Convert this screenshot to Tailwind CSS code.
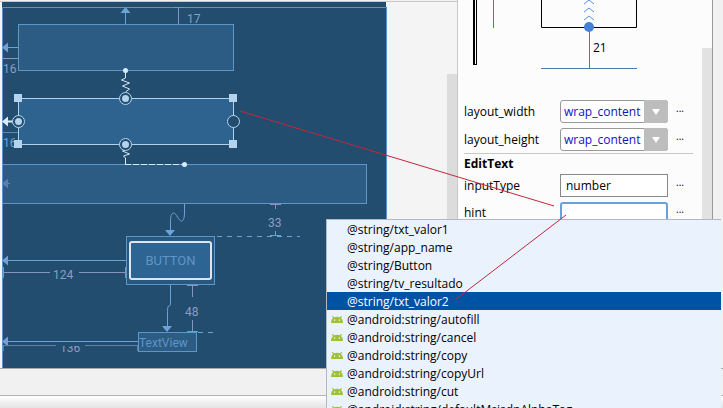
<!DOCTYPE html>
<html lang="en">

<head>
    <meta charset="UTF-8" />
    <meta name="viewport" content="width=device-width, initial-scale=1.0" />
    <title>Layout Editor</title>
    <script src="https://cdn.jsdelivr.net/npm/@tailwindcss/browser@4"></script>
</head>

<body class="relative flex flex-col h-screen overflow-hidden bg-[#f1f1f1] text-black text-[12px] font-['Open_Sans','Noto_Sans',sans-serif]">
    <main class="flex flex-1 min-h-0">
        <!-- Design surface -->
        <section class="relative flex-1 min-w-0 bg-[#f4f4f4] border-t border-[#c8c8c8] mt-px pl-[2px] overflow-hidden">
            <div class="relative w-[385px] h-full bg-[#234d6e] overflow-hidden">
                <svg class="block w-[385px] h-[366px] font-[Roboto,sans-serif]" viewBox="2 2 385 366" fill="none">
                    <defs>
                        <clipPath id="cut"><rect x="50" y="346" width="40" height="12" /></clipPath>
                    </defs>
                    <!-- device frame -->
                    <path d="M386 2h1v5h-1z" fill="#f4f4f4" />
                    <path d="M2.500 368V7.500H386.500V368" stroke="#5f93c2" />
                    <!-- widgets -->
                    <g stroke="#5f96c8">
                        <rect x="18.500" y="24.500" width="215" height="46" fill="#2c5b83" />
                        <rect x="2.500" y="164.500" width="364" height="39" fill="#2c5b83" />
                        <rect x="126.500" y="236.500" width="88" height="48" fill="#29587f" />
                        <rect x="138.500" y="332.500" width="58" height="19" fill="#2c5b83" />
                    </g>
                    <!-- constraints -->
                    <g stroke="#6ba3d6">
                        <path d="M125.500 24V12M18 47.500H7M126 260.500H7M138 341.500H7" />
                        <path d="M184.500 204v8c0 6-1 9-3 9c-3 0-5-8-8-8c-2 0-3 4-3 8v10M170.500 285v18c0 4-1 2-2 3s-1 4-1 8v13" />
                        <path d="M3 132.500H18M7 183.500h3" stroke="#5289bb" />
                    </g>
                    <path d="M125.500 7l5 6h-10zM2 47.500l6-5v10zM2 260.500l6-5v10zM2 341.500l6-5v10zM170 236l-5-6h10zM167 332l-5-6h10z" fill="#6ba3d6" />
                    <path d="M2 183.500l6-5v10z" fill="#4d84b6" />
                    <!-- margins -->
                    <g stroke="#8795bd">
                        <path d="M178.500 8V24M174 7.500h10M3 58.500H18" />
                        <path d="M3 272.500H50M79 272.500H126M3.500 267v11M125.500 267v11" />
                        <path d="M275.500 204v5M270 204.500h11M275.500 231v5M270 235.500h11" />
                        <path d="M192.500 285v12M187 285.500h11M192.500 320v12M187 331.500h11" />
                        <path d="M3 345.500H56M85 345.500H138M3.500 346v5M137.500 346v5" stroke="#647fa4" />
                    </g>
                    <path d="M217 236.500H300M198 332.500H214" stroke="#6ba3d6" stroke-dasharray="5 5" />
                    <g fill="#8f9cc4" font-size="12">
                        <text x="187" y="23">17</text>
                        <text x="3" y="73">16</text>
                        <text x="3" y="147" fill="#6ba3d6">16</text>
                        <text x="53" y="279">124</text>
                        <text x="268" y="227">33</text>
                        <text x="185" y="316">48</text>
                        <text x="60" y="352" clip-path="url(#cut)">136</text>
                    </g>
                    <text x="139" y="347" font-size="12" fill="#5f96c8">TextView</text>
                    <!-- selected widget -->
                    <rect x="18.500" y="98.500" width="215" height="46" fill="#2e628f" stroke="#add2f0" />
                    <path d="M125.500 70v8l-4 2l8 3l-7 3l7 3l-4 3M125.500 150l-3 1l7 3l-6 2l2 2v6" stroke="#d5ebfa" />
                    <path d="M125 164.500h57" stroke="#d5ebfa" stroke-dasharray="6 2" />
                    <g fill="#d5ebfa">
                        <circle cx="125.500" cy="70.500" r="2.500" />
                        <circle cx="184.500" cy="164.500" r="2.500" />
                        <path d="M2 121.500l6-5v4h5v2h-5v4z" />
                    </g>
                    <path d="M14 94h8v8h-8zM229 94h8v8h-8zM14 140h8v8h-8zM229 140h8v8h-8z" fill="#b4d3ec" />
                    <g fill="#234d6e" stroke="#b4d6f0">
                        <circle cx="125.500" cy="98.500" r="6" />
                        <circle cx="125.500" cy="144.500" r="6" />
                        <circle cx="18.500" cy="121.500" r="6" />
                        <circle cx="233.500" cy="121.500" r="6" />
                    </g>
                    <g fill="#b4d3ec">
                        <circle cx="125.500" cy="98.500" r="3.500" />
                        <circle cx="125.500" cy="144.500" r="3.500" />
                        <circle cx="18.500" cy="121.500" r="3.500" />
                    </g>
                </svg>
                <button class="absolute left-[127px] top-[239px] w-[83px] h-[39px] rounded-[3px] border-2 border-[#dce6f3] bg-[#2e6492] text-[#5f96c8] text-[13px] font-[Roboto,sans-serif]">BUTTON</button>
            </div>
            <div class="absolute right-0 top-[72px] bottom-0 w-[10px] bg-[#dcdcdc]"></div>
        </section>

        <!-- Attributes -->
        <aside class="relative w-[256px] bg-[#fcfcfc] border-l border-r border-l-[#c8c8c8] border-r-[#999999] overflow-hidden">
            <svg class="block w-full h-[97px]" viewBox="458 0 254 97" fill="none">
                <path d="M473 0h4v65h-4z" fill="#000" />
                <path d="M475.500 0v64" stroke="#fff" />
                <path d="M493.500 0v28M589.500 28v40M541 68.500h96" stroke="#4a7ab5" />
                <path d="M541.500 0v27.500h95V0" stroke="#000" />
                <path d="M584 4l5-4l5 4M584 12l5-4l5 4M584 20l5-4l5 4" stroke="#5b8fdc" />
                <circle cx="589" cy="27" r="5" fill="#4481d8" />
                <text x="593" y="52" font-size="12" fill="#000">21</text>
            </svg>
            <div class="pl-[6px] pr-[19px]">
                <div class="flex items-center h-7 pt-px">
                    <label for="width" class="w-24">layout_width</label>
                    <div class="relative w-[108px] h-[23px]">
                        <select id="width" class="appearance-none w-full h-full pl-[3px] bg-white border border-[#999999] rounded-[3px] text-[#1010c8]">
                            <option>wrap_content</option>
                        </select>
                        <span class="absolute right-0 top-0 flex items-center justify-center w-6 h-full bg-[#bdbdbd] rounded-r-[3px] pointer-events-none">
                            <svg class="w-2 h-[6px]" viewBox="0 0 8 6"><path d="M0 0h8L4 6z" fill="#fff" /></svg>
                        </span>
                    </div>
                    <button class="ml-2 h-6 text-[10px] leading-3 pb-2">...</button>
                </div>
                <div class="flex items-center h-7 pt-px">
                    <label for="height" class="w-24">layout_height</label>
                    <div class="relative w-[108px] h-[23px]">
                        <select id="height" class="appearance-none w-full h-full pl-[3px] bg-white border border-[#999999] rounded-[3px] text-[#1010c8]">
                            <option>wrap_content</option>
                        </select>
                        <span class="absolute right-0 top-0 flex items-center justify-center w-6 h-full bg-[#bdbdbd] rounded-r-[3px] pointer-events-none">
                            <svg class="w-2 h-[6px]" viewBox="0 0 8 6"><path d="M0 0h8L4 6z" fill="#fff" /></svg>
                        </span>
                    </div>
                    <button class="ml-2 h-6 text-[10px] leading-3 pb-2">...</button>
                </div>
                <h2 class="h-[19px] border-t border-[#c8c8c8] font-bold leading-5">EditText</h2>
                <div class="flex items-center h-[27px]">
                    <label for="inputType" class="w-24">inputType</label>
                    <input id="inputType" type="text" value="number" class="w-[108px] h-[23px] pl-[5px] bg-white border border-[#888888]" />
                    <button class="ml-2 h-6 text-[10px] leading-3 pb-2">...</button>
                </div>
                <div class="flex items-center h-7">
                    <label for="hint" class="w-24">hint</label>
                    <input id="hint" type="text" class="w-[108px] h-[23px] bg-white border-2 border-[#6ba0dc] rounded-[3px]" />
                    <button class="ml-2 h-6 text-[10px] leading-3 pb-2">...</button>
                </div>
            </div>
            <div class="absolute right-0 top-12 bottom-0 w-[10px] bg-[#e2e2e2]"></div>
        </aside>
        <div class="w-[10px] bg-[#f1f1f1]"></div>
    </main>

    <footer class="border-t border-[#aaaaaa] bg-[#f1f1f1]">
        <div class="h-[26px]"></div>
        <div class="h-[13px] border-t border-[#b4b4b4] bg-linear-to-b from-white to-[#e4e4e4]"></div>
    </footer>

    <!-- Completion popup -->
    <ul id="popup" role="listbox" class="absolute left-[326px] right-[2px] top-[219px] bottom-0 overflow-hidden bg-[#eaf2fd] border-t border-l border-[#b4b8c0] leading-[18px]">
        <li class="h-[18px] pt-px pl-5">@string/txt_valor1</li>
        <li class="h-[18px] pt-px pl-5">@string/app_name</li>
        <li class="h-[18px] pt-px pl-5">@string/Button</li>
        <li class="h-[18px] pt-px pl-5">@string/tv_resultado</li>
        <li class="h-[18px] pt-px pl-5 bg-[#0052a4] text-white">@string/txt_valor2</li>
    </ul>

    <!-- Pointer lines -->
    <svg class="absolute left-0 top-0 w-[723px] h-[408px] pointer-events-none" viewBox="0 0 723 408" fill="none">
        <path d="M240 111L554 206M566 215L455 300" stroke="#c0283a" />
    </svg>

    <script>
        const names = ['autofill', 'cancel', 'copy', 'copyUrl', 'cut', 'defaultMsisdnAlphaTag'];
        const icon = '<svg class="w-3 h-[7px] mt-[5px]" viewBox="0 0 12 7"><path d="M1.500 0L3.300 1.200Q6 .4 8.700 1.200L10.500 0l.6.600L10 2Q12 3.500 12 7H0Q0 3.500 2 2L.9.6z" fill="#9fc037"/><path d="M3 3.500h1.200v1.200H3zM7.800 3.500H9v1.200H7.800z" fill="#fff"/></svg>';
        names.forEach(name => {
            document.getElementById('popup').insertAdjacentHTML('beforeend',
                '<li class="flex items-start h-[18px] pt-px gap-1 pl-1">' + icon + '<span>@android:string/' + name + '</span></li>');
        });
    </script>
</body>

</html>
